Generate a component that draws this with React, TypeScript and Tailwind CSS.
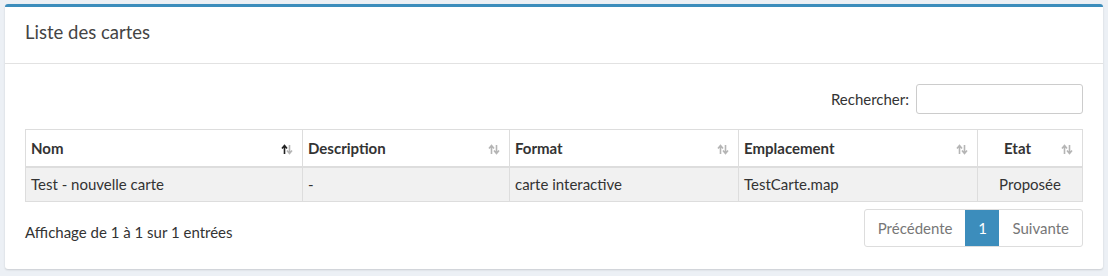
import React from "react";

function SortIcon({ active }: { active?: boolean }) {
  const up = active ? "#222" : "#b5b5b5";
  const down = "#b5b5b5";
  return (
    <svg width="12" height="11" viewBox="0 0 12 11" className="absolute right-[9px] top-[14px]">
      <path d="M3.5 10V2M1 4.5L3.5 1.5L6 4.5" stroke={up} strokeWidth="1.6" fill="none" />
      <path d="M8.5 1V9M6 6.5L8.5 9.5L11 6.5" stroke={down} strokeWidth="1.6" fill="none" />
    </svg>
  );
}

const cols = [
  { label: "Nom", w: "w-[277px]", active: true },
  { label: "Description", w: "w-[207px]" },
  { label: "Format", w: "w-[229px]" },
  { label: "Emplacement", w: "w-[239px]" },
  { label: "Etat", w: "w-[105px]", center: true },
];

export default function App() {
  return (
    <div className="w-[1108px] h-[276px] bg-[#ecf0f5] pt-[4px] px-[5px] text-[#333] text-[15px]" style={{ fontFamily: "Lato, 'Open Sans', sans-serif" }}>
      <div className="w-[1098px] bg-white border-t-[3px] border-[#3c8dbc] rounded-[3px] shadow-[0_1px_2px_rgba(0,0,0,0.15)]">
        <div className="h-[57px] flex items-start pt-[12px] px-[20px] border-b border-[#e2e2e2]">
          <h3 className="text-[18.5px] text-[#444]">Liste des cartes</h3>
        </div>
        <div className="px-[20px] pt-[20px] pb-[22px]">
          <div className="flex justify-end items-center gap-[7px]">
            <span>Rechercher:</span>
            <input className="w-[167px] h-[30px] border border-[#ccc] rounded-[3px]" />
          </div>
          <table className="mt-[15px] w-[1057px] border-collapse table-fixed border border-[#ddd]">
            <thead>
              <tr className="h-[37px]">
                {cols.map((c) => (
                  <th key={c.label} className={`${c.w} relative border border-[#ddd] border-b-[2px] pl-[5px] pr-[30px] font-bold ${c.center ? "text-center" : "text-left"}`}>
                    {c.label}
                    <SortIcon active={c.active} />
                  </th>
                ))}
              </tr>
            </thead>
            <tbody>
              <tr className="h-[35px] bg-[#f1f1f1]">
                <td className="border border-[#ddd] px-[5px]">Test - nouvelle carte</td>
                <td className="border border-[#ddd] px-[5px]">-</td>
                <td className="border border-[#ddd] px-[5px]">carte interactive</td>
                <td className="border border-[#ddd] px-[5px]">TestCarte.map</td>
                <td className="border border-[#ddd] px-[5px] text-center">Proposée</td>
              </tr>
            </tbody>
          </table>
          <div className="mt-[7px] flex items-center justify-between">
            <span className="pt-[8px]">Affichage de 1 à 1 sur 1 entrées</span>
            <div className="flex h-[38px] border border-[#ddd] rounded-[3px] overflow-hidden">
              <span className="px-[13px] flex items-center text-[#777]">Précédente</span>
              <span className="w-[34px] flex items-center justify-center bg-[#3c8dbc] text-white">1</span>
              <span className="px-[13px] flex items-center text-[#777]">Suivante</span>
            </div>
          </div>
        </div>
      </div>
    </div>
  );
}
